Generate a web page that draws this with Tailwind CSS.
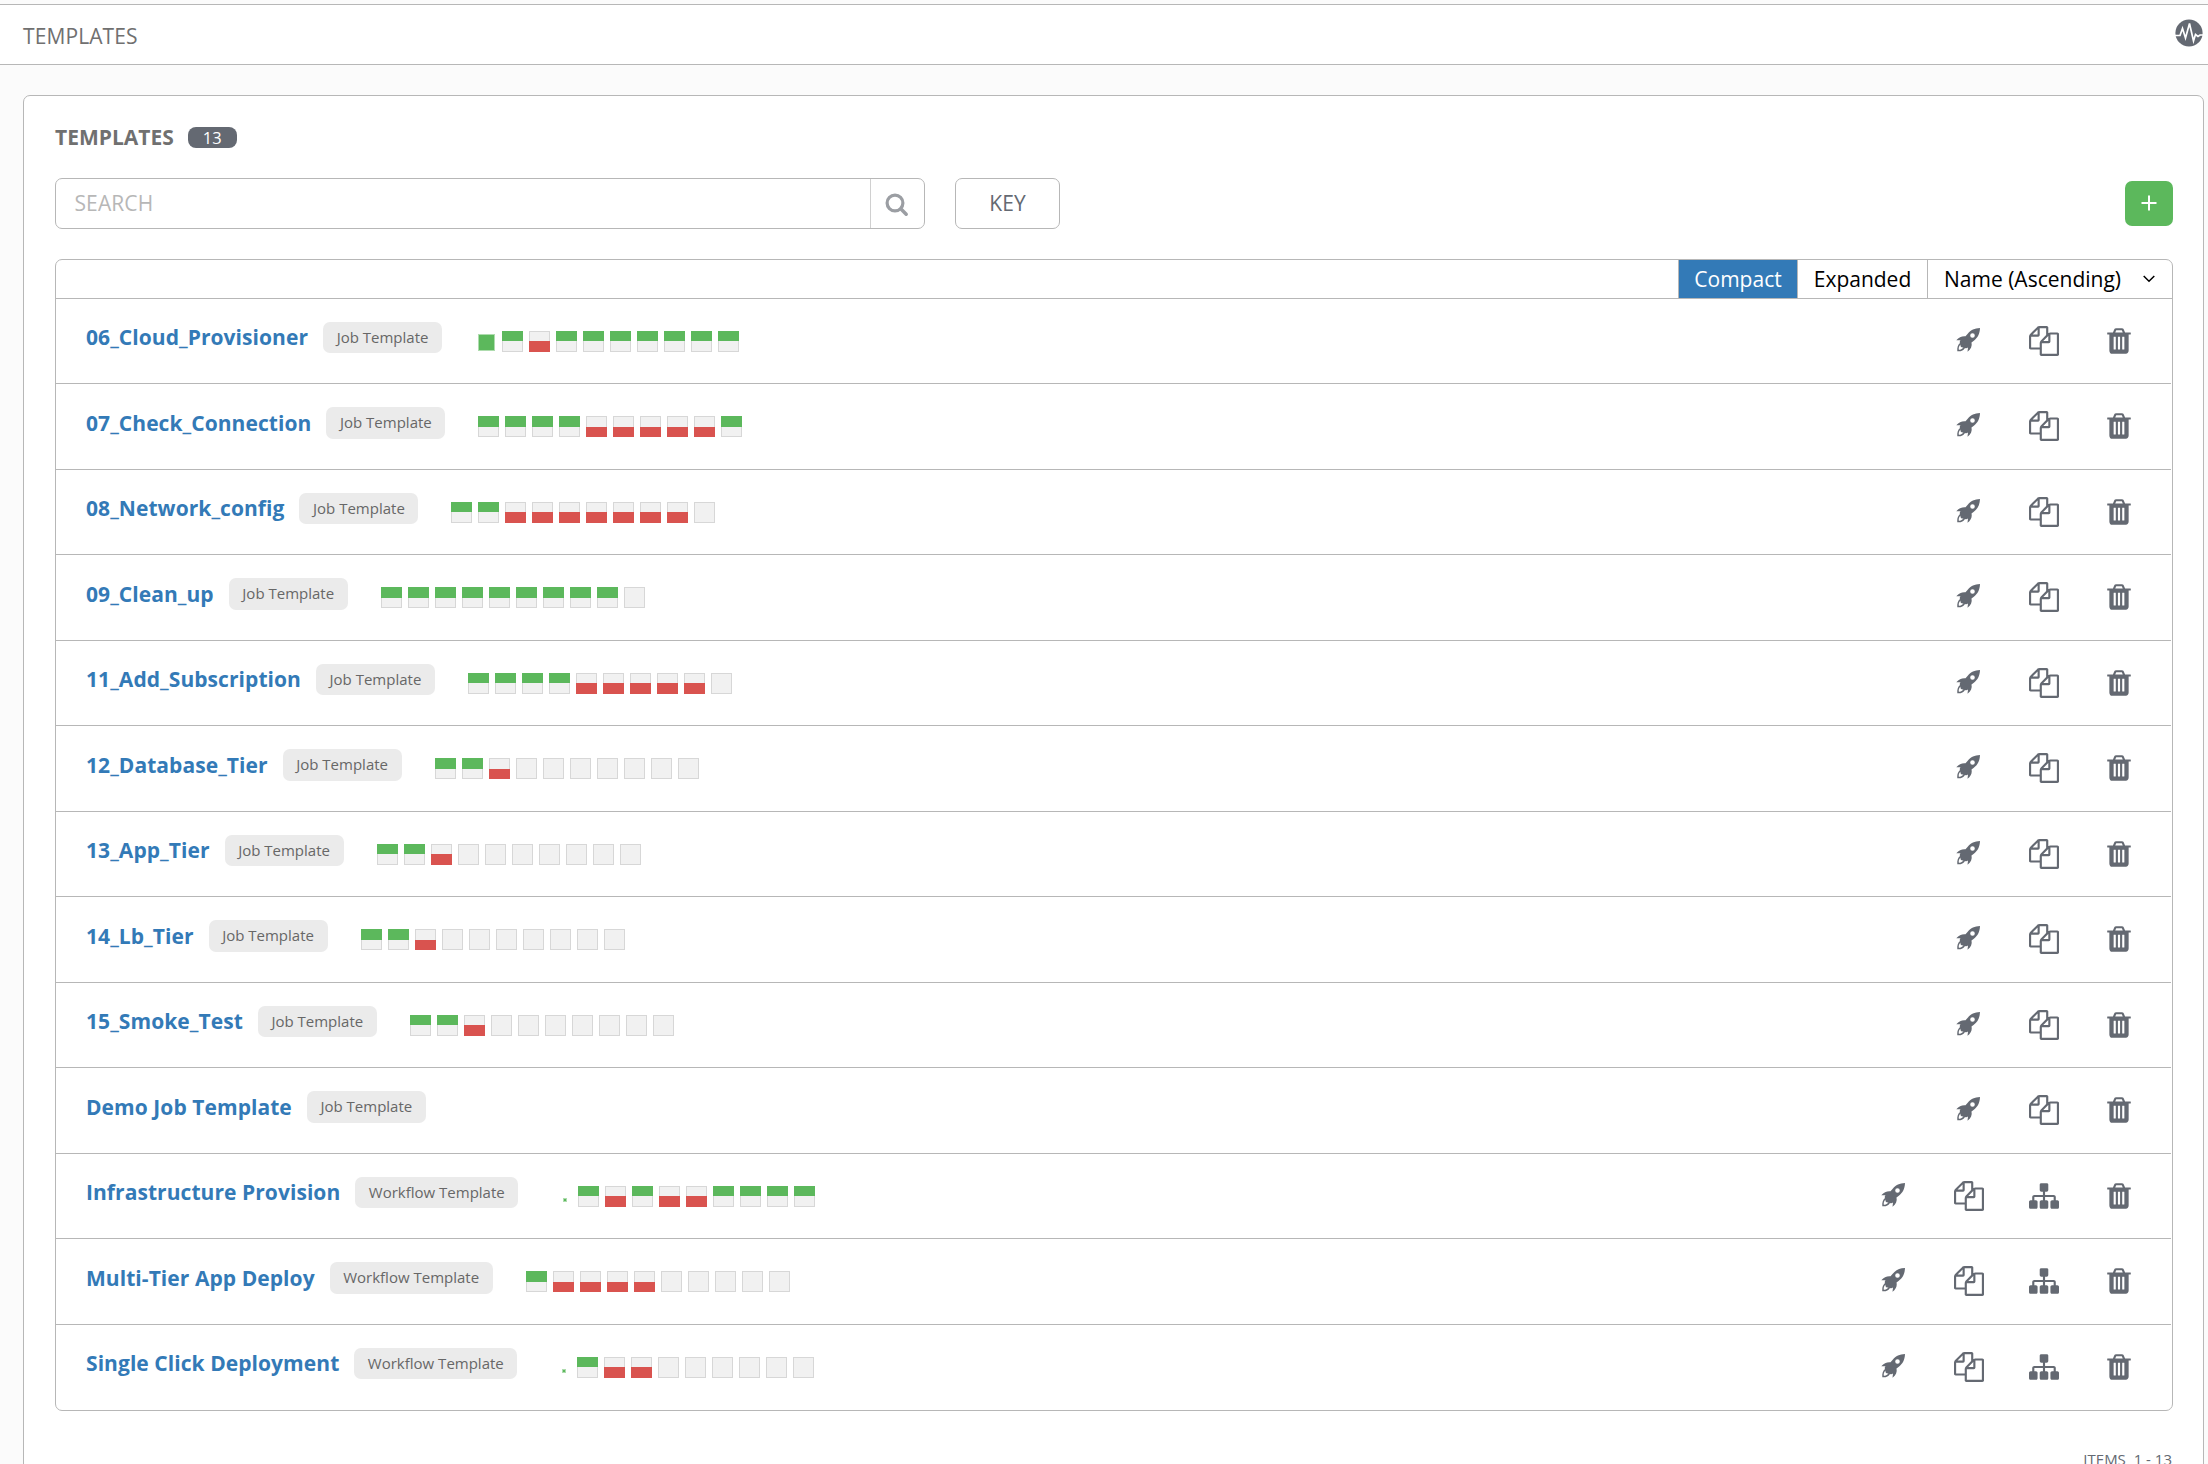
<!DOCTYPE html>
<html lang="en">
<head>
<meta charset="utf-8">
<title>Templates</title>
<script src="https://cdn.jsdelivr.net/npm/@tailwindcss/browser@4"></script>
</head>
<body class="bg-[#fbfbfb] w-[2208px] h-[1464px] overflow-hidden font-['Open_Sans',sans-serif] text-[21px] leading-[30px] text-[#646972]">
<svg class="hidden">
  <symbol id="rocket" viewBox="0 0 24 24"><path fill-rule="evenodd" d="M24 0C18.500 .2 15 1.800 11.500 6L9.500 8.300C6 8 3 9 .3 12.300L4.500 12.300C3.700 13.500 3.500 14 4 15C1.800 17 1 19.500 1.300 23.300C5 23.600 7.500 22.500 9 20C10 20.500 11 20.300 12 19.500L11.500 23.800C15 21 16.300 18 15.500 14.500L17.500 13C22 9.500 23.700 6 24 0ZM16.500 5.200A2.300 2.300 0 1 1 16.500 9.800A2.300 2.300 0 1 1 16.500 5.200ZM4.500 16.500C4 18.500 5.500 20 7.500 19.500C6 21.200 4.500 21.800 2.800 21.800C2.500 19.800 3 18 4.500 16.500Z"/></symbol>
  <symbol id="copy" viewBox="0 0 1792 1792"><path d="M1696 384q40 0 68 28t28 68v1216q0 40-28 68t-68 28h-960q-40 0-68-28t-28-68v-288h-544q-40 0-68-28t-28-68v-672q0-40 20-88t48-76l408-408q28-28 76-48t88-20h416q40 0 68 28t28 68v328q68-40 128-40h416zm-544 213l-299 299h299v-299zm-640-384l-299 299h299v-299zm196 647l316-316v-416h-384v416q0 40-28 68t-68 28h-416v640h512v-256q0-40 20-88t48-76zm956 804v-1152h-384v416q0 40-28 68t-68 28h-416v640h896z"/></symbol>
  <symbol id="sitemap" viewBox="0 0 1792 1792"><path d="M1792 1248v320q0 40-28 68t-68 28h-320q-40 0-68-28t-28-68v-320q0-40 28-68t68-28h96v-192h-512v192h96q40 0 68 28t28 68v320q0 40-28 68t-68 28h-320q-40 0-68-28t-28-68v-320q0-40 28-68t68-28h96v-192h-512v192h96q40 0 68 28t28 68v320q0 40-28 68t-68 28h-320q-40 0-68-28t-28-68v-320q0-40 28-68t68-28h96v-192q0-52 38-90t90-38h512v-192h-96q-40 0-68-28t-28-68v-320q0-40 28-68t68-28h320q40 0 68 28t28 68v320q0 40-28 68t-68 28h-96v192h512q52 0 90 38t38 90v192h96q40 0 68 28t28 68z"/></symbol>
  <symbol id="trash" viewBox="0 0 1792 1792"><path d="M704 1376v-704q0-14-9-23t-23-9h-64q-14 0-23 9t-9 23v704q0 14 9 23t23 9h64q14 0 23-9t9-23zm256 0v-704q0-14-9-23t-23-9h-64q-14 0-23 9t-9 23v704q0 14 9 23t23 9h64q14 0 23-9t9-23zm256 0v-704q0-14-9-23t-23-9h-64q-14 0-23 9t-9 23v704q0 14 9 23t23 9h64q14 0 23-9t9-23zm-544-992h448l-48-117q-7-9-17-11h-317q-10 2-17 11zm928 32v64q0 14-9 23t-23 9h-96v948q0 83-47 143.500t-113 60.500h-832q-66 0-113-58.500t-47-141.500v-952h-96q-14 0-23-9t-9-23v-64q0-14 9-23t23-9h309l70-167q15-37 54-63t79-26h320q40 0 79 26t54 63l70 167h309q14 0 23 9t9 23z"/></symbol>
</svg>

<header class="mt-1 h-[61px] bg-white border-y border-[#b7b7b7] flex items-center justify-between pl-[23px] pr-[5px]">
  <h1 class="pt-[2px] text-[#707070] tracking-[0.1px]">TEMPLATES</h1>
  <svg class="size-[28px] mb-[4px]" viewBox="0 0 28 28"><circle cx="14" cy="14" r="13.600" fill="#646972"/><path d="M0 16.500H5L7.500 9.500L10.500 19L14.500 4.500L18.500 22L20.500 15.500L23 17.500L25 16H28" fill="none" stroke="#fff" stroke-width="1.700"/></svg>
</header>

<main class="mt-[30px] ml-[23px] w-[2181px] h-[1400px] bg-white border border-[#b7b7b7] rounded-[7px] px-[31px]">
  <div class="mt-[26px] h-[30px] flex items-center">
    <h2 class="font-bold text-[#707070]">TEMPLATES</h2>
    <span class="ml-[14px] w-[49px] h-[21px] rounded-[8px] bg-[#646972] text-white text-[16.500px] leading-[21px] text-center">13</span>
  </div>
  <div class="mt-[26px] h-[51px] flex items-center">
    <div class="w-[870px] h-[51px] border border-[#b7b7b7] rounded-[7px] flex">
      <span class="w-[814px] pl-[18.500px] leading-[49px] text-[#b7b7b7] tracking-[0.1px]">SEARCH</span>
      <span class="flex-1 border-l border-[#d0d0d0] flex items-center justify-center pt-[3px] pr-[1px]"><svg class="size-[24px]" viewBox="0 0 24 24" fill="none" stroke="#9b9ea3"><circle cx="10" cy="10" r="7.900" stroke-width="3.200"/><path d="M16 16l5.200 5.200" stroke-width="3.500" stroke-linecap="round"/></svg></span>
    </div>
    <button class="ml-[30px] w-[105px] h-[51px] pb-[1px] border border-[#b7b7b7] rounded-[7px]">KEY</button>
    <button class="ml-auto -mr-px w-[48px] h-[45px] pb-[1px] rounded-[7px] bg-[#5cb85c] flex items-center justify-center"><svg class="size-[16px]" viewBox="0 0 16 16"><path d="M8 .5v15M.5 8h15" stroke="#fff" stroke-width="2"/></svg></button>
  </div>

  <section class="mt-[30px] w-[2118px] h-[1152px] border border-[#b7b7b7] rounded-[7px] overflow-hidden">
    <div class="h-[39px] border-b border-[#b7b7b7] flex justify-end text-black leading-[38px]">
      <span class="w-[120px] border-x border-[#b7b7b7] bg-[#337ab7] text-white text-center">Compact</span>
      <span class="w-[130px] border-r border-[#b7b7b7] text-center">Expanded</span>
      <span class="w-[244px] pl-[16px] flex items-center gap-[22px]">Name (Ascending)<svg class="w-[12px] h-[8px]" viewBox="0 0 12 8"><path d="M.7 1L6 6.300L11.300 1" fill="none" stroke="#000" stroke-width="1.500"/></svg></span>
    </div>
    <div id="rows" class="mr-px"></div>
  </section>
  <p class="mt-[38px] text-right text-[15px] leading-[20px] whitespace-pre">ITEMS  1 - 13</p>
</main>

<script>
// Job history codes: g = success, r = failed, e = empty, G = running, d = pending dot
const templates = [
  ['06_Cloud_Provisioner', 'Job', 'Ggrggggggg'],
  ['07_Check_Connection', 'Job', 'ggggrrrrrg'],
  ['08_Network_config', 'Job', 'ggrrrrrrre'],
  ['09_Clean_up', 'Job', 'ggggggggge'],
  ['11_Add_Subscription', 'Job', 'ggggrrrrre'],
  ['12_Database_Tier', 'Job', 'ggreeeeeee'],
  ['13_App_Tier', 'Job', 'ggreeeeeee'],
  ['14_Lb_Tier', 'Job', 'ggreeeeeee'],
  ['15_Smoke_Test', 'Job', 'ggreeeeeee'],
  ['Demo Job Template', 'Job', ''],
  ['Infrastructure Provision', 'Workflow', 'dgrgrrgggg'],
  ['Multi-Tier App Deploy', 'Workflow', 'grrrreeeee'],
  ['Single Click Deployment', 'Workflow', 'dgrreeeeee'],
];
const icon = (id, size) => `<span class="w-[75px] flex justify-center"><svg class="${size} fill-[#646972]"><use href="#${id}"/></svg></span>`;
const half = color => `<i class="block w-[21px] ${color}"></i>`;
function spark(code, odd) {
  const top = odd ? 'h-[10px]' : 'h-[11px]', bottom = odd ? 'h-[11px]' : 'h-[10px]';
  if (code === 'G') return '<i class="block ml-[3px] mr-[1px] mt-[3px] size-[17px] bg-[#5cb85c] border border-[#aedcae]"></i>';
  if (code === 'd') return '<i class="block ml-[12px] mr-[5px] mt-[12px] size-[4px] bg-[#5cb85c] border border-[#aedcae]"></i>';
  if (code === 'g') return `<i class="block w-[21px]">${half(top + ' bg-[#5cb85c]')}${half(bottom + ' bg-[#f1f1f1] border border-t-0 border-[#d7d7d7]')}</i>`;
  if (code === 'r') return `<i class="block w-[21px]">${half(top + ' bg-[#f1f1f1] border border-b-0 border-[#d7d7d7]')}${half(bottom + ' bg-[#d9534f]')}</i>`;
  return '<i class="block size-[21px] bg-[#f1f1f1] border border-[#d7d7d7]"></i>';
}
document.getElementById('rows').innerHTML = templates.map(([name, kind, jobs], i) => {
  const odd = i % 2 === 0, wf = kind === 'Workflow', last = i === templates.length - 1;
  return `<div class="${odd ? 'h-[85px]' : 'h-[86px]'} ${last ? '' : 'border-b border-[#b7b7b7]'} flex items-start pl-[30px] pr-[15px]">
    <a class="${odd ? 'mt-[23px]' : 'mt-[24px]'} font-bold text-[#337ab7] whitespace-nowrap tracking-[0.06px]">${name}</a>
    <span class="ml-[15px] mt-[23px] ${wf ? 'w-[163px]' : 'w-[119px]'} ${odd ? 'h-[31px] leading-[30px]' : 'h-[32px] leading-[31px]'} rounded-[7px] bg-[#ebebeb] text-[15px] text-center text-[#676767] whitespace-nowrap">${kind} Template</span>
    <div class="ml-[33px] mt-[32px] h-[21px] flex gap-[6px]">${[...jobs].map(c => spark(c, odd)).join('')}</div>
    <div class="ml-auto mt-[27px] flex">${icon('rocket', 'size-[24px] mt-[2px] mr-[1px]')}${icon('copy', 'size-[30px]')}${wf ? icon('sitemap', 'size-[30px]') : ''}${icon('trash', 'size-[30px]')}</div>
  </div>`;
}).join('');
</script>
</body>
</html>
